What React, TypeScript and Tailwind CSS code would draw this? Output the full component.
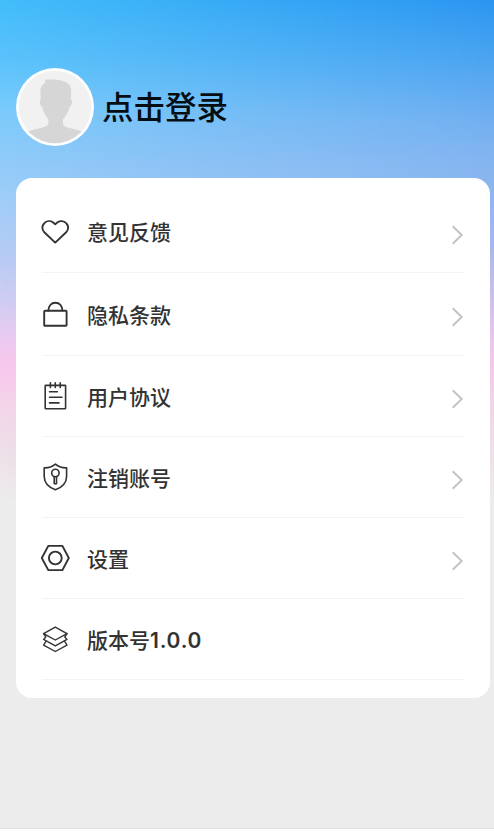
import type { ReactNode } from "react";

function Icon({ children, width = 1.9 }: { children: ReactNode; width?: number }) {
  return (
    <svg
      viewBox="0 0 30 30"
      className="size-[30px] shrink-0"
      fill="none"
      stroke="#333333"
      strokeWidth={width}
      strokeLinejoin="round"
      strokeLinecap="round"
    >
      {children}
    </svg>
  );
}

const heart = (
  <Icon>
    <path d="M15.2 25.6 L4.3 15.2 C1.6 12.6 1.8 8.6 4.3 6.2 C6.7 3.6 10.4 3.6 12.8 5.3 L15.2 7.2 L17.6 5.3 C20 3.6 23.8 3.6 26.2 6.2 C28.7 8.6 28.9 12.6 26.2 15.2 Z" />
  </Icon>
);

const lock = (
  <Icon>
    <rect x="4.2" y="11.8" width="22.4" height="14.9" rx="0.8" />
    <path d="M8.4 11.6 C8.6 6.8 11.3 3.7 15.4 3.7 C19.5 3.7 22.2 6.8 22.4 11.6" />
  </Icon>
);

const notes = (
  <Icon width={1.6}>
    <rect x="5.2" y="4.4" width="20.4" height="23.4" rx="0.6" />
    <path d="M10.4 1.9 V6.4 M15.3 1.9 V6.4 M20.2 1.9 V6.4 M9.5 10.8 H17.4 M9.5 16.3 H22 M9.5 21.9 H19" />
  </Icon>
);

const shield = (
  <Icon width={1.6}>
    <path d="M15.4 2.2 C12.3 4.8 8.6 6 4.2 5.9 V14.5 C4.3 21 8.9 25.4 15.4 27.8 C21.9 25.4 26.5 21 26.6 14.5 V5.9 C22.2 6 18.5 4.8 15.4 2.2 Z" />
    <circle cx="15.4" cy="11" r="3.7" />
    <path d="M14.2 14.6 V21.8 H16.5 V14.6" />
  </Icon>
);

const nut = (
  <Icon>
    <path d="M8.3 2.9 H22.4 L28.8 15 L22.4 27.1 H8.3 L1.8 15 Z" />
    <circle cx="15.3" cy="15" r="6.4" />
  </Icon>
);

const layers = (
  <Icon width={1.4}>
    <path d="M15.3 3.2 L27 9.6 L15.3 16 L3.6 9.6 Z" />
    <path d="M3.6 9.6 L5.8 13 L3.6 15.4 L15.3 21.8 L27 15.4 L24.8 13 L27 9.6" />
    <path d="M5.8 17.6 L3.6 21.1 L15.3 27.5 L27 21.1 L24.8 17.6" />
  </Icon>
);

function Row({ icon, label, version, arrow = true, className }: { icon: ReactNode; label: string; version?: string; arrow?: boolean; className: string }) {
  return (
    <div className={`flex items-center border-b border-[#f3f3f3] ${className}`}>
      <div className="-ml-0.5">{icon}</div>
      <span className="mt-[3px] ml-[17px] flex-1 text-[21px] leading-[30px] font-medium text-[#333333]">
        {label}
        {version && <span className="font-['Inter'] font-semibold tracking-[0.8px]">{version}</span>}
      </span>
      {arrow && (
        <svg viewBox="0 0 14 20" className="mt-1.5 h-5 w-3.5 shrink-0" fill="none" stroke="#c2c2c2" strokeWidth="1.9">
          <path d="M2.7 1.2 L11.7 10 L2.7 18.8" />
        </svg>
      )}
    </div>
  );
}

function Avatar() {
  return (
    <svg viewBox="0 0 78 78" className="size-[78px] shrink-0">
      <defs>
        <clipPath id="face">
          <circle cx="39" cy="39" r="36.2" />
        </clipPath>
      </defs>
      <circle cx="39" cy="39" r="39" fill="#fdfeff" />
      <circle cx="39" cy="39" r="36.2" fill="#f1f1f1" />
      <path
        clipPath="url(#face)"
        fill="#d6d6d6"
        d="M28.8 11.7 C36 11.4 44 11.2 50 14.2 C54 16.2 55.6 20 55.2 25 L54.9 31.5 C56.8 32 56 38 53.7 38.8 C52.7 44 49.5 48.3 47 51.3 V56.2 C49.5 61 60 60.2 66 63.6 L74 78 H4 L12.5 63.2 C20 60.2 29 60.8 32.3 56.3 V51.3 C29.7 48 26.8 43.7 26.1 38.8 C23.6 37.8 23.2 32 24.8 31.2 L24.4 24 C24.3 19.7 25.7 16.7 29.7 14.5 Z"
      />
    </svg>
  );
}

export default function App() {
  return (
    <div className="flex h-[831px] w-[494px] flex-col bg-white font-['Roboto','Noto_Sans_CJK_SC',sans-serif]">
      <div className="grid h-[829px] border-b border-[#e0e0e0] bg-[linear-gradient(180deg,#42bdfb_0px,#5bc3fb_60px,#7acbfb_110px,#90cbf9_160px,#a0cdf8_200px,#b4ccf4_250px,#cfcdf2_300px,#ebcaf0_340px,#f8c8ed_365px,#f4d3ea_400px,#eedfe8_450px,#ececec_500px)]">
        <div className="col-start-1 row-start-1 h-[500px] bg-[linear-gradient(180deg,#2b95f0_0px,#4ca4f0_60px,#72aff0_120px,#83b4f0_160px,#8fb7ee_200px,#a9b9ec_250px,#cdbfee_300px,#ecc5ee_340px,#f7c6ea_365px,#f2d3e8_400px,#eedfe8_450px,#ececec_500px)] [mask-image:linear-gradient(90deg,transparent,black)]" />
        <div className="relative col-start-1 row-start-1 pr-1 pl-4">
          <header className="flex items-center gap-2 pt-[67.5px]">
            <Avatar />
            <h1 className="mt-1 text-[31.5px] leading-[40px] font-medium text-[#060d12]">点击登录</h1>
          </header>
          <main className="mt-[32.5px] h-[520px] rounded-2xl bg-white px-[26px] pt-[13px]">
            <Row icon={heart} label="意见反馈" className="h-[82px]" />
            <Row icon={lock} label="隐私条款" className="h-[83px]" />
            <Row icon={notes} label="用户协议" className="h-[81px]" />
            <Row icon={shield} label="注销账号" className="h-[81px]" />
            <Row icon={nut} label="设置" className="h-[81px]" />
            <Row icon={layers} label="版本号" version="1.0.0" arrow={false} className="h-[81px]" />
          </main>
        </div>
      </div>
    </div>
  );
}
